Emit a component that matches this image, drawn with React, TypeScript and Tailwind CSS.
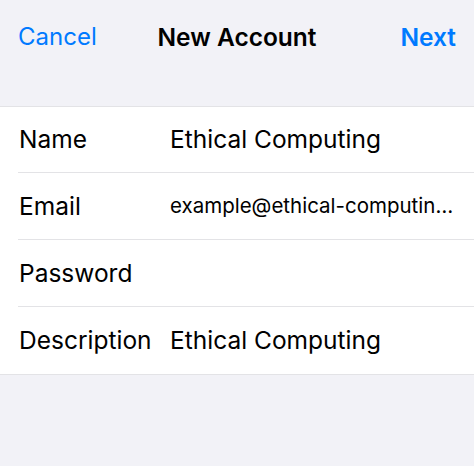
import React from "react";

const rows: { label: string; value: string; small?: boolean }[] = [
  { label: "Name", value: "Ethical Computing" },
  { label: "Email", value: "example@ethical-computin…", small: true },
  { label: "Password", value: "" },
  { label: "Description", value: "Ethical Computing" },
];

export default function App() {
  return (
    <div
      className="w-[474px] h-[466px] bg-[#f2f2f7] overflow-hidden"
      style={{ fontFamily: "Inter, 'Noto Sans', sans-serif" }}
    >
      <div className="h-[106px] pt-[19px]">
        <div className="grid grid-cols-[1fr_auto_1fr] items-center h-[34px] px-[18px]">
          <span className="text-[24px] text-[#007aff] justify-self-start">Cancel</span>
          <span className="text-[24.5px] font-semibold text-black">New Account</span>
          <span className="text-[24.5px] font-semibold text-[#007aff] justify-self-end">Next</span>
        </div>
      </div>
      <div className="bg-white border-t border-b border-[#e3e3e6]">
        {rows.map((r, i) => (
          <div key={r.label} className="pl-[18px]">
            <div
              className={`flex items-center ${i === 0 ? "h-[66px]" : "h-[67px]"} ${
                i < rows.length - 1 ? "border-b border-[#e3e3e6]" : ""
              }`}
            >
              <div className="w-[152px] pl-[1px] shrink-0 text-[24.5px] text-black">
                {r.label}
              </div>
              <div
                className={`flex-1 min-w-0 whitespace-nowrap text-black ${
                  r.small ? "text-[20.5px]" : "text-[24.5px]"
                }`}
              >
                {r.value}
              </div>
            </div>
          </div>
        ))}
      </div>
    </div>
  );
}
